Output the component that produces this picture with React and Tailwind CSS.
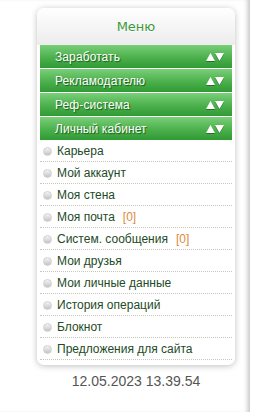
import React from "react";

const sections = ["Заработать", "Рекламодателю", "Реф-система", "Личный кабинет"];
const items = [
  { t: "Карьера" },
  { t: "Мой аккаунт" },
  { t: "Моя стена" },
  { t: "Моя почта", c: "[0]" },
  { t: "Систем. сообщения", c: "[0]" },
  { t: "Мои друзья" },
  { t: "Мои личные данные" },
  { t: "История операций" },
  { t: "Блокнот" },
  { t: "Предложения для сайта" },
];

function Arrows() {
  return (
    <svg width="18" height="8" viewBox="0 0 18 8" className="drop-shadow-[0_1px_0_rgba(0,0,0,0.35)]">
      <polygon points="0,8 4.5,0 9,8" fill="#fff" />
      <polygon points="9,0 18,0 13.5,8" fill="#fff" />
    </svg>
  );
}

export default function App() {
  return (
    <div className="w-[263px] h-[412px] bg-white flex font-['Liberation_Sans','DejaVu_Sans',sans-serif]">
      <div className="w-[250px] h-full flex flex-col shadow-[inset_-5px_0_5px_-3px_rgba(0,0,0,0.25)]">
        <div className="ml-[37px] mt-[8px] w-[198px] rounded-[7px] bg-white shadow-[0_1px_6px_rgba(0,0,0,0.25)] pb-[5px]">
          <div className="h-[37px] rounded-t-[7px] bg-gradient-to-b from-white to-[#ececec] flex items-center justify-center">
            <span className="text-[13px] text-[#3a9a3a] font-['DejaVu_Sans',sans-serif] [text-shadow:0_1px_0_#fff]">Меню</span>
          </div>
          <div className="px-[3px] flex flex-col gap-px">
            {sections.map((s) => (
              <div
                key={s}
                className="h-[23px] flex items-center justify-between pl-[15px] pr-[8px] bg-gradient-to-b from-[#79cf79] via-[#4fb34f] to-[#2f9a34]"
              >
                <span className="text-[12px] text-white [text-shadow:1px_1px_1px_rgba(0,60,0,0.7)] tracking-[0.1px]">
                  {s}
                </span>
                <Arrows />
              </div>
            ))}
          </div>
          <div className="px-[3px] flex flex-col">
            {items.map((it) => (
              <div
                key={it.t}
                className="h-[22px] flex items-center border-b border-dotted border-[#c8c8b8] pl-[3px] pt-[1px]"
              >
                <span className="w-[9px] h-[9px] rounded-full bg-gradient-to-b from-[#f4f4f4] to-[#c4c4c4] border border-[#d0d0d0] mr-[5px] shrink-0" />
                <span className="text-[12px] text-[#234a26]">{it.t}</span>
                {it.c && <span className="ml-[8px] text-[12px] text-[#e08a3c]">{it.c}</span>}
              </div>
            ))}
          </div>
        </div>
        <div className="ml-[37px] w-[198px] mt-[6px] text-center text-[14px] text-[#555]">
          12.05.2023 13.39.54
        </div>
      </div>
      <div className="flex-1" />
    </div>
  );
}
